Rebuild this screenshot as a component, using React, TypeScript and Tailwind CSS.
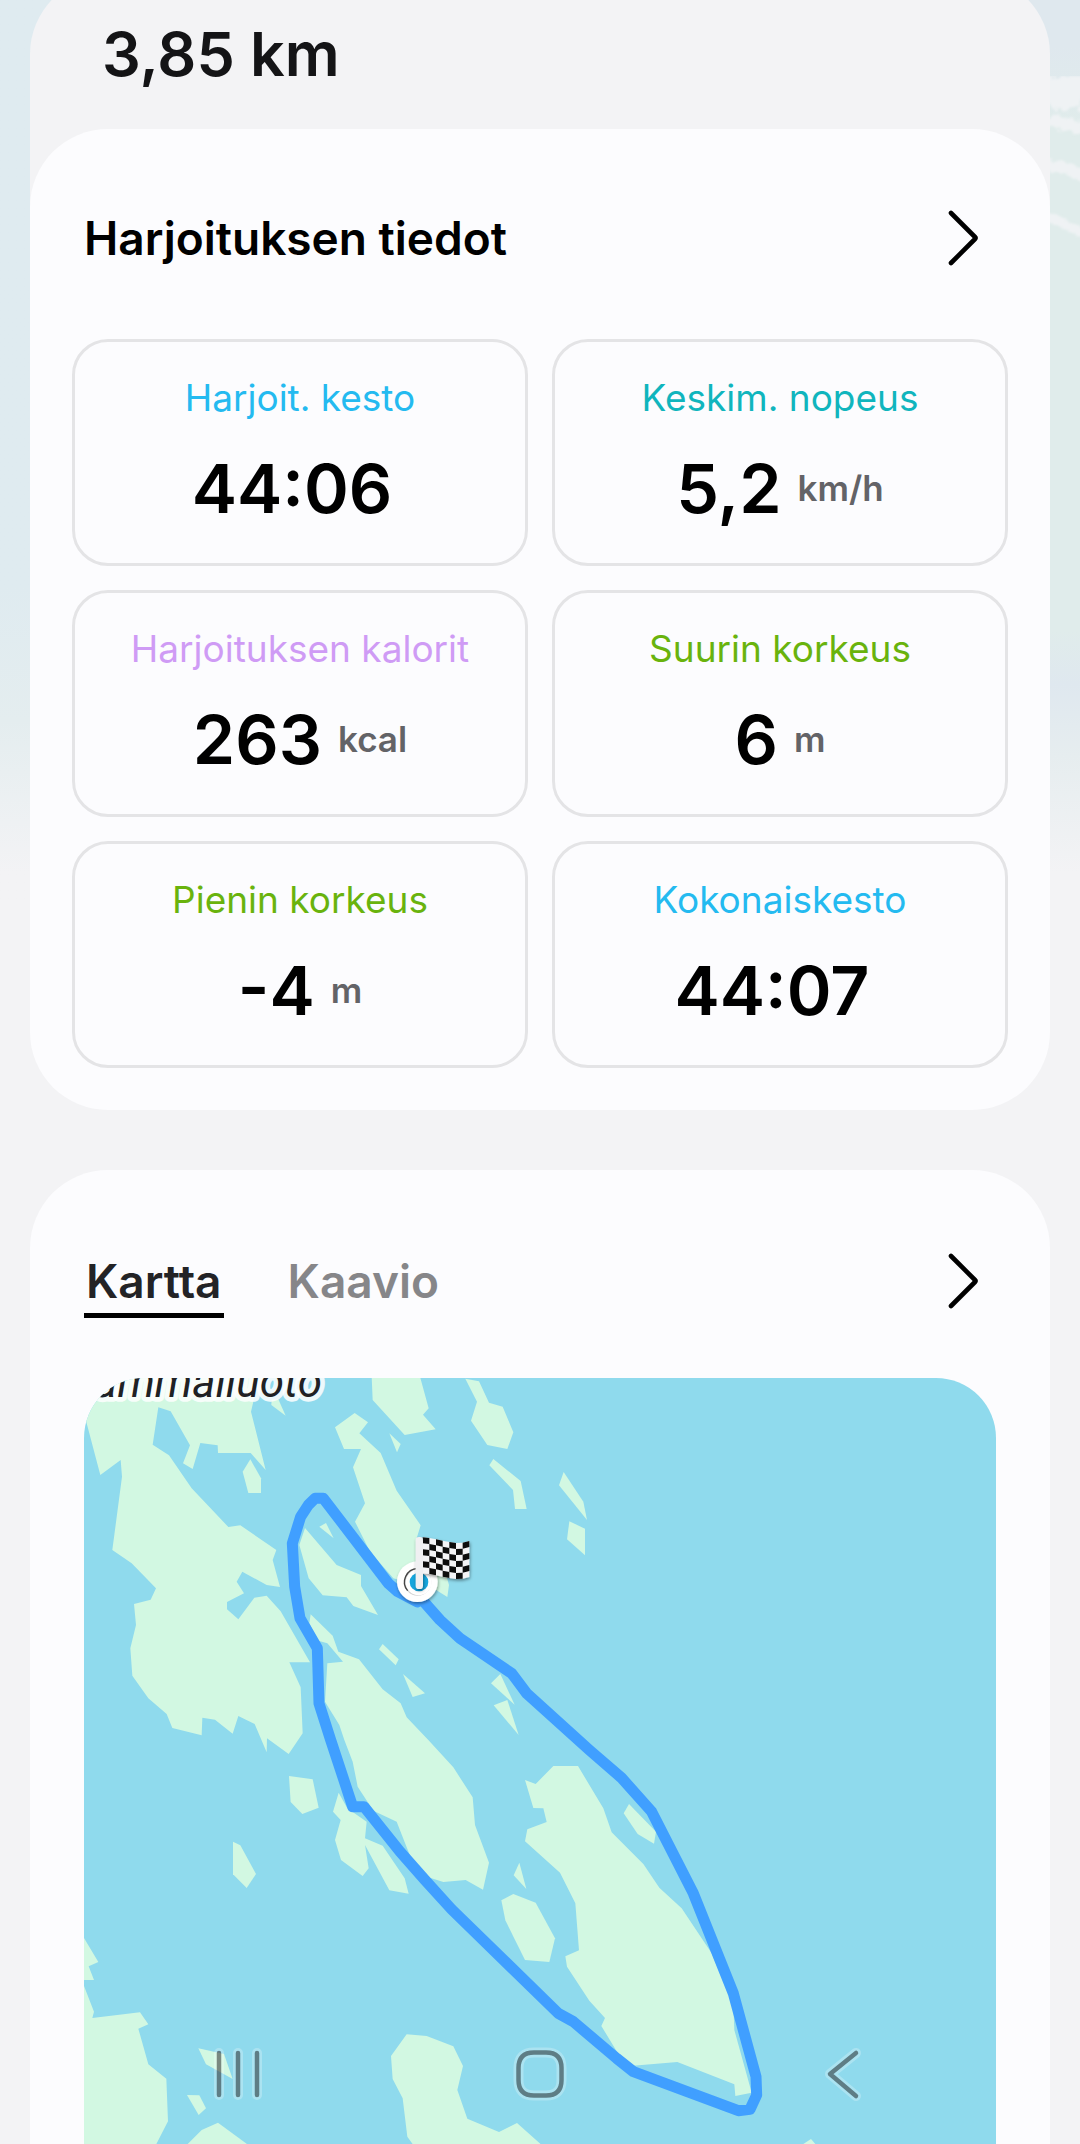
import React, { useState } from "react";

interface Stat {
    label: string;
    value: string;
    unit?: string;
    color: string;
}

const stats: Stat[] = [
    { label: "Harjoit. kesto", value: "44:06", color: "text-[#24baf0]" },
    { label: "Keskim. nopeus", value: "5,2", unit: "km/h", color: "text-[#10b5bd]" },
    { label: "Harjoituksen kalorit", value: "263", unit: "kcal", color: "text-[#cf9bf5]" },
    { label: "Suurin korkeus", value: "6", unit: "m", color: "text-[#69b30d]" },
    { label: "Pienin korkeus", value: "-4", unit: "m", color: "text-[#69b30d]" },
    { label: "Kokonaiskesto", value: "44:07", color: "text-[#24baf0]" },
];

// land outlines, grouped by map tile
const landTiles = [
    {
        x: -72,
        y: -24,
        shapes: [
            "72,20 72,130 80,160 121,315 182,270 186,320 157,540 215,580 288,655 272,689 222,702 228,765 211,835 217,917 265,985 320,1032 337,1074 425,1096 427,1043 465,1049 518,1091 535,1038 584,1062 620,1147 621,1105 686,1152 728,1090 722,952 688,877 750,877 662,724 620,677 583,683 535,748 501,718 501,696 552,670 530,635 547,605 620,645 660,651 638,570 649,540 541,466 505,471 395,355 327,256 278,224 295,112 332,124 390,226 369,280 398,297 421,219 473,226 474,249 572,249 617,300 573,125 588,60 590,20",
            "635,88 655,88 677,137 634,105",
            "571,268 603,325 603,369 565,369 548,305",
            "735,474 830,585 903,615 903,648 954,735 880,708 860,682 788,676 746,625 718,525",
            "778,470 798,459 821,505",
            "752,733 818,797 835,845 897,868 968,958 1022,1000 1040,1042 1105,1110 1180,1192 1238,1282 1245,1365 1287,1478 1269,1559 1217,1530 1150,1536 1105,1522 1053,1465 1010,1355 940,1322 893,1250 878,1175 853,1110 838,1065 795,995 802,880 849,875 802,820 775,812 748,760",
            "884,129 924,157 898,190 962,249 1010,362 1082,466 1070,505 1100,560 1160,620 1167,645 1162,681 1120,655 1050,640 1000,625 930,545 885,455 915,400 879,292 903,237 852,237 825,172",
            "935,20 1080,20 1106,115 1089,134 1127,178 1034,195 938,90",
        ],
    },
    {
        x: 888,
        y: -24,
        shapes: [
            "28,190 62,222 51,247",
            "256,26 297,34 327,98 368,110 400,187 382,237 322,225 273,152 291,95",
            "340,267 422,333 440,417 405,417 399,360 328,286",
            "551,306 610,395 621,450 537,346",
            "568,454 615,476 615,556 561,508",
            "8,822 56,868 47,886 -3,838",
            "69,912 135,970 98,981",
            "361,912 404,1004 333,940",
            "382,990 416,1095 341,1006",
        ],
    },
    {
        x: -72,
        y: 1086,
        shapes: [
            "687,108 758,118 776,203 727,222 692,186",
            "519,305 541,316 588,402 560,444 519,403",
            "836,158 862,205 920,245 915,295 968,317 1034,415 1046,461 988,451 915,315 926,385 908,408 843,360 825,300 842,240 819,215",
            "72,594 115,666 86,679 102,720 72,720",
            "72,738 102,815 97,834 240,817 265,853 235,866 265,973 319,1016 324,1144 285,1220 72,1220",
            "415,925 492,942 518,1017 438,973",
            "381,1065 418,1066 438,1105 416,1125",
            "380,1215 425,1170 474,1148 565,1215",
        ],
    },
    {
        x: 948,
        y: 1086,
        shapes: [
            "20,883 80,888 160,919 189,978 172,1050 202,1136 297,1176 351,1149 425,1215 40,1215 22,1190 8,1075 -22,1017 -27,948",
            "375,120 407,132 460,78 534,78 610,205 635,277 730,372 778,443 845,505 935,640 1000,795 1003,870 1055,1058 1006,1068 1003,1033 832,966 690,978 660,950 604,858 615,834 568,782 501,680 496,649 537,631 526,490 480,398 375,304 382,268 440,246 430,205 400,204",
            "687,192 768,275 762,311 713,282 671,220",
            "358,368 379,447 341,406",
            "304,481 340,462 407,488 465,595 448,666 375,660 316,541",
            "1210,1212 1233,1197 1246,1212",
        ],
    },
];

const route =
    "1006,656 1068,726 1128,781 1283,886 1328,946 1516,1116 1613,1200 1703,1301 1828,1546 1948,1846 2016,2096 2018,2151 1998,2194 1963,2198 1648,2081 1598,2041 1468,1931 1423,1906 1103,1594 1023,1506 948,1421 840,1286 806,1286 740,1086 705,976 700,811 648,721 632,626 625,496 650,416 673,381 693,361 718,361 913,616 940,640 1000,672";

// how far the cloth sinks at each column edge of the flag
const flagWave = [0, 2, 6, 10, 14, 17, 16, 11];

const flagCells: string[] = [];
for (let col = 0; col < 7; col++) {
    for (let row = 0; row < 6; row++) {
        if ((col + row) % 2 === 1) continue;
        const x0 = 128 + col * 20;
        const x1 = x0 + 20;
        const y0 = 502 + row * 18;
        flagCells.push(
            `${x0},${y0 + flagWave[col]} ${x1},${y0 + flagWave[col + 1]} ${x1},${y0 + 18 + flagWave[col + 1]} ${x0},${y0 + 18 + flagWave[col]}`
        );
    }
}

const ChevronIcon = () => (
    <svg viewBox="0 0 32 56" className="h-14 w-8" fill="none" stroke="currentColor" strokeWidth="4.6" strokeLinecap="round" strokeLinejoin="round">
        <path d="M4 3 28 27Q29 28 28 29L4 53" />
    </svg>
);

const StatTile = ({ label, value, unit, color }: Stat) => (
    <div className="flex flex-col items-center rounded-[36px] border-3 border-[#e4e4e6] pt-[34px] pb-[35px]">
        <dt className={`text-[37px] leading-[44px] ${color}`}>{label}</dt>
        <dd className="mt-7 flex items-center gap-4">
            <span className="text-[68px] leading-[80px] font-semibold text-black">{value}</span>
            <span className="text-[35px] leading-[44px] font-semibold text-[#636367]">{unit}</span>
        </dd>
    </div>
);

const RouteMap = () => (
    <div className="overflow-hidden rounded-t-[60px] bg-[#8fdaed]">
        <svg viewBox="0 0 2736 2298" className="block w-full" role="img" aria-label="Reitti kartalla">
            <defs>
                <filter id="soft" x="-30%" y="-30%" width="160%" height="160%">
                    <feDropShadow dx="2" dy="5" stdDeviation="5" floodColor="#000" floodOpacity="0.4" />
                </filter>
            </defs>
            {landTiles.map((tile, i) => (
                <g key={i} transform={`translate(${tile.x} ${tile.y})`} fill="#d2f8e2">
                    {tile.shapes.map((points) => (
                        <polygon key={points} points={points} />
                    ))}
                </g>
            ))}
            <text
                x="714"
                y="57"
                textAnchor="end"
                fontSize="132"
                fontStyle="italic"
                fill="#202124"
                stroke="#fff"
                strokeOpacity="0.85"
                strokeWidth="28"
                strokeLinejoin="round"
                paintOrder="stroke"
                className="font-['Roboto',sans-serif]"
            >
                Sammalluoto
            </text>
            <polyline points={route} fill="none" stroke="#409fff" strokeWidth="33" strokeLinecap="round" strokeLinejoin="round" />
            {/* start / finish marker */}
            <g transform="translate(888 -24)">
                <g filter="url(#soft)">
                    <circle cx="112" cy="635" r="61" fill="#fff" />
                </g>
                <circle cx="113" cy="636" r="41" fill="#d0d0d0" />
                <path d="M113 596a40 40 0 0 0-30 66" fill="none" stroke="#444" strokeWidth="4" />
                <circle cx="116" cy="637" r="39" fill="#fff" />
                <circle cx="117" cy="636" r="28" fill="#16a5dc" />
                <g filter="url(#soft)">
                    <path d="M128 502L148 504 168 508 188 512 208 516 228 519 248 518 268 513V621L248 626 228 627 208 624 188 620 168 616 148 612 128 610Z" fill="#f4f4f6" />
                    {flagCells.map((points) => (
                        <polygon key={points} points={points} fill="#0a0a0a" />
                    ))}
                    <rect x="107" y="501" width="22" height="156" rx="10" fill="#f0f0f2" />
                </g>
            </g>
        </svg>
    </div>
);

const navIcons = [
    { name: "Viimeisimmät", d: "M11 9v42M30 9v42M49 9v42" },
    { name: "Koti", d: "M24 8.500H36Q51.500 8.500 51.500 24V36Q51.500 51.500 36 51.500H24Q8.500 51.500 8.500 36V24Q8.500 8.500 24 8.500Z" },
    { name: "Takaisin", d: "M44 9 18 30 44 52" },
];

const SystemNav = () => (
    <nav className="fixed inset-x-0 bottom-0 grid h-[140px] grid-cols-3 items-center justify-items-center px-[87px]">
        {navIcons.map(({ name, d }) => (
            <button key={name} type="button" aria-label={name}>
                <svg viewBox="0 0 60 60" className="size-[60px]" fill="none" strokeLinecap="round" strokeLinejoin="round">
                    <path d={d} stroke="#fff" strokeOpacity="0.25" strokeWidth="10" />
                    <path d={d} stroke="#000" strokeOpacity="0.45" strokeWidth="4.5" />
                </svg>
            </button>
        ))}
    </nav>
);

const tabs = ["Kartta", "Kaavio"];

const App = () => {
    const [activeTab, setActiveTab] = useState("Kartta");

    return (
        <div className="relative isolate min-h-screen overflow-hidden bg-[#f3f3f5] font-['Inter','Liberation_Sans',sans-serif]">
            {/* faded photo behind the cards */}
            <div className="absolute inset-x-0 top-0 -z-10 h-[900px] bg-linear-to-b from-[#dfebf0] from-65% via-[#e4edef] via-80% to-[#f3f3f5] to-97%" />
            <div className="absolute top-0 right-0 -z-10 h-[900px] w-[60px] bg-[linear-gradient(to_bottom,#dfe8ee_5%,#e0eceb_14%,#e0eceb_70%,#dfe8ef_76%,#e6edef_84%,#f3f3f5_97%)]">
                <svg viewBox="0 0 60 260" className="mt-[70px] w-full" fill="none" stroke="#f2f4f6">
                    <defs>
                        <filter id="foam">
                            <feTurbulence type="fractalNoise" baseFrequency="0.12 0.2" numOctaves="3" />
                            <feDisplacementMap in="SourceGraphic" scale="14" />
                            <feGaussianBlur stdDeviation="1" />
                        </filter>
                    </defs>
                    <g filter="url(#foam)" strokeOpacity="0.8">
                        <path d="M26 30Q45 14 66 26" strokeWidth="34" />
                        <path d="M26 50 66 58" strokeWidth="12" />
                        <path d="M26 96Q46 94 66 108" strokeWidth="12" />
                        <path d="M26 146 66 164" strokeWidth="9" />
                    </g>
                </svg>
            </div>

            <main className="px-[30px]">
                <div className="-mt-6 rounded-t-[78px] bg-[#f3f3f5]">
                    <p className="px-[72px] pt-[42px] pb-[39px] text-[61px] leading-[72px] font-semibold text-[#141416]">3,85 km</p>

                    <section className="rounded-[78px] bg-[#fcfcfe] px-[42px] pb-[42px]">
                        <div className="flex items-center justify-between pt-[74px] pr-[29px] pb-[66px] pl-3">
                            <h2 className="text-[46px] leading-[70px] font-semibold text-black">Harjoituksen tiedot</h2>
                            <button type="button" aria-label="Avaa harjoituksen tiedot">
                                <ChevronIcon />
                            </button>
                        </div>
                        <dl className="grid grid-cols-2 gap-6">
                            {stats.map((stat) => (
                                <StatTile key={stat.label} {...stat} />
                            ))}
                        </dl>
                    </section>
                </div>

                <section className="mt-[60px] rounded-t-[78px] bg-[#fcfcfe] px-[54px] pt-[83px]">
                    <div className="mb-[60px] flex items-start justify-between pr-[17px]">
                        <div role="tablist" className="flex gap-[62px]">
                            {tabs.map((tab) => (
                                <button
                                    key={tab}
                                    type="button"
                                    role="tab"
                                    aria-selected={activeTab === tab}
                                    onClick={() => setActiveTab(tab)}
                                    className={`border-b-5 px-[2px] pb-1 text-[46px] leading-[56px] font-semibold ${
                                        activeTab === tab ? "border-black text-[#232326]" : "border-transparent text-[#868689]"
                                    }`}
                                >
                                    {tab}
                                </button>
                            ))}
                        </div>
                        <button type="button" aria-label="Avaa kartta">
                            <ChevronIcon />
                        </button>
                    </div>
                    <RouteMap />
                </section>
            </main>

            <SystemNav />
        </div>
    );
};

export default App;
